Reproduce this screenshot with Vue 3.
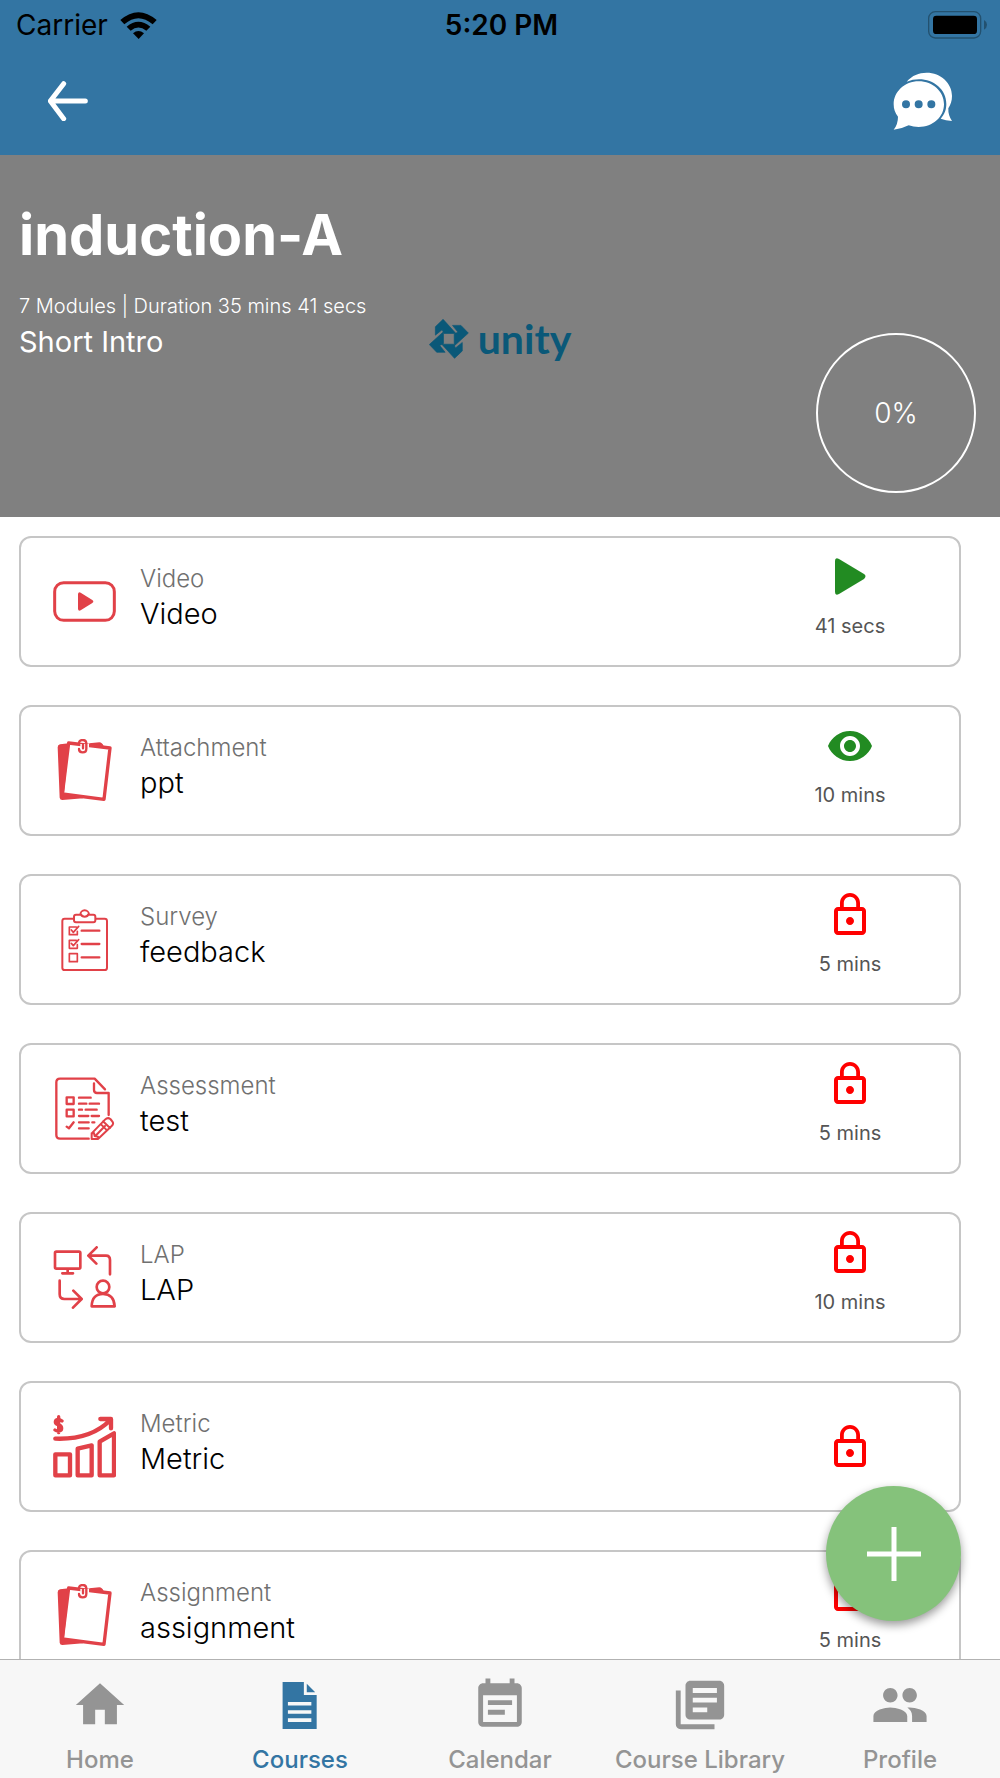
<script setup>
import { ref } from 'vue'

// Course modules
const modules = [
  { id: 1, type: 'Video', title: 'Video', icon: 'video', status: 'play', time: '41 secs' },
  { id: 2, type: 'Attachment', title: 'ppt', icon: 'paper', status: 'view', time: '10 mins' },
  { id: 3, type: 'Survey', title: 'feedback', icon: 'survey', status: 'lock', time: '5 mins' },
  { id: 4, type: 'Assessment', title: 'test', icon: 'assessment', status: 'lock', time: '5 mins' },
  { id: 5, type: 'LAP', title: 'LAP', icon: 'lap', status: 'lock', time: '10 mins' },
  { id: 6, type: 'Metric', title: 'Metric', icon: 'metric', status: 'lock', time: '' },
  { id: 7, type: 'Assignment', title: 'assignment', icon: 'paper', status: 'lock', time: '5 mins' }
]

// Bottom tabs
const tabs = [
  { name: 'Home', path: 'M10 20v-6h4v6h5v-8h3L12 3 2 12h3v8z' },
  { name: 'Courses', path: 'M4.8 2.5h8.8v5.4h5.3v14H4.800zM14.800 3.200v3.500h3.500zM7 10.800v1.400h9.700v-1.400zM7 14.200v1.400h9.700v-1.400zM7 17.500v1.500h9.700v-1.500z' },
  { name: 'Calendar', path: 'M17 10H7v2h10v-2zm2-7h-1V1h-2v2H8V1H6v2H5c-1.110 0-2 .9-2 2v14c0 1.100.890 2 2 2h14c1.100 0 2-.9 2-2V5c0-1.100-.9-2-2-2zm0 16H5V8h14v11zm-5-5H7v2h7v-2z' },
  { name: 'Course Library', path: 'M4 6H2v14c0 1.100.9 2 2 2h14v-2H4V6zm16-4H8c-1.100 0-2 .9-2 2v12c0 1.100.9 2 2 2h12c1.100 0 2-.9 2-2V4c0-1.100-.9-2-2-2zm-1 5H9V5h10v2zm0 4H9V9h10v2zm-4 4H9v-2h6v2z' },
  { name: 'Profile', path: 'M16 11c1.660 0 2.990-1.340 2.990-3S17.660 5 16 5s-3 1.340-3 3 1.340 3 3 3zm-8 0c1.660 0 2.990-1.340 2.990-3S9.660 5 8 5 5 6.340 5 8s1.340 3 3 3zm0 2c-2.330 0-7 1.170-7 3.500V19h14v-2.500c0-2.330-4.670-3.500-7-3.500zm8 0c-.290 0-.620.020-.970.050 1.160.840 1.970 1.970 1.970 3.450V19h6v-2.500c0-2.330-4.670-3.500-7-3.500z' }
]

const activeTab = ref('Courses')
</script>

<template>
  <div class="screen">
    <header class="header">
      <div class="status-bar">
        <div class="carrier">
          <span>Carrier</span>
          <svg class="wifi" viewBox="360 30 111 81" aria-hidden="true">
            <path d="M361 54Q415 7 470 54L458 67Q415 30 373 67Z" />
            <path d="M380 74Q415 44 451 74L439 86Q415 67 392 86Z" />
            <path d="M399 94Q415 80 432 94L416 111Z" />
          </svg>
        </div>
        <span class="clock">5:20 PM</span>
        <svg class="battery" viewBox="1284 31 177 84" aria-hidden="true">
          <rect x="1286" y="33" width="156" height="79" rx="20" fill="none" stroke="#23516f" stroke-width="4" />
          <rect x="1299" y="45" width="132" height="55" rx="10" />
          <path d="M1452 58Q1461 63 1461 72T1452 87Z" fill="#23516f" />
        </svg>
      </div>
      <div class="nav">
        <button type="button" aria-label="Back">
          <svg class="back-icon" viewBox="144 242 120 120" aria-hidden="true">
            <path d="M191 250L151 302L191 355M152 302H256" />
          </svg>
        </button>
        <button type="button" aria-label="Messages">
          <svg class="chat-icon" viewBox="1176 211 180 180" aria-hidden="true">
            <path d="M1220 243C1237 224 1256 216 1280 216C1322 216 1356 247 1356 286C1356 300 1352 312 1345 323Q1344 344 1356 361Q1337 359 1322 354C1334 340 1339 327 1339 310C1339 267 1302 236 1257 236Q1238 236 1220 243Z" />
            <path fill-rule="evenodd" d="M1256 242C1214 242 1181 273 1181 311C1181 325 1185 337 1194 348Q1194 371 1181 387Q1205 385 1226 374Q1240 379 1256 379C1299 379 1332 349 1332 311S1299 242 1256 242ZM1218 299a12 12 0 1 1 0 24a12 12 0 0 1 0-24ZM1256 299a12 12 0 1 1 0 24a12 12 0 0 1 0-24ZM1294 299a12 12 0 1 1 0 24a12 12 0 0 1 0-24Z" />
          </svg>
        </button>
      </div>
    </header>

    <section class="hero">
      <div class="brand">
        <svg viewBox="1284 959 119 119" aria-hidden="true">
          <path
            v-for="n in 4"
            :key="n"
            :transform="`rotate(${n * 90} 1343 1018)`"
            d="M1326 960L1303 982V1007L1323 991L1329 1002H1364Z"
          />
        </svg>
        <span>unity</span>
      </div>
      <div class="summary">
        <h1>induction-A</h1>
        <p class="meta">7 Modules | Duration 35 mins 41 secs</p>
        <p class="intro">Short Intro</p>
      </div>
      <div class="progress">0%</div>
    </section>

    <main class="content">
      <ul class="modules">
        <li v-for="item in modules" :key="item.id" class="card">
          <svg v-if="item.icon === 'video'" class="type-icon" viewBox="159 150 189 189" aria-hidden="true">
            <rect class="line" x="164" y="188" width="179" height="113" rx="27" stroke-width="9" />
            <path class="solid" d="M234 222Q235 215 242 218L277 240Q283 245 277 249L242 271Q235 274 234 267Z" />
          </svg>
          <svg v-else-if="item.icon === 'paper'" class="type-icon" viewBox="159 657 189 189" aria-hidden="true">
            <path class="solid" d="M180 673L207 670L192 820L250 835L187 840Q180 840 179 833L173 682Q173 674 180 673ZM268 670L298 667Q306 667 311 678L268 675Z" />
            <path class="line" stroke-width="10" d="M206 669L330 684L312 838L187 822Z" />
            <path d="M241 672H267V690H241Z" fill="#fff" />
            <path class="line" stroke-width="7" d="M237 667Q239 660 248 660Q259 660 259 671V686Q259 697 248 697T237 687M249 673V685" />
          </svg>
          <svg v-else-if="item.icon === 'survey'" class="type-icon" viewBox="159 144 189 189" aria-hidden="true">
            <path class="line" stroke-width="6" d="M221 176H194Q187 176 187 183V323Q187 330 194 330H314Q321 330 321 323V183Q321 176 314 176H287M228 164H241A13 13 0 1 1 267 164H280Q286 164 286 170V181Q286 187 280 187H228Q222 187 222 181V170Q222 164 228 164ZM242 162A13 13 0 0 0 266 162" />
            <path class="line" stroke-width="5" d="M229 201H208V224H232V214M214 210L220 217L236 199M229 241H208V265H232V254M214 250L220 257L236 239M208 281H232V305H208Z" />
            <path class="line" stroke-width="7" d="M245 212H298M245 252H298M245 292H298" />
          </svg>
          <svg v-else-if="item.icon === 'assessment'" class="type-icon" viewBox="159 651 189 189" aria-hidden="true">
            <path class="line" stroke-width="7" d="M266 836H180Q169 836 169 825V667Q169 656 180 656H284L315 688M282 670V690Q282 699 291 699H326V765M237 713H272M237 731H259M269 731H297M237 749H246M257 749H290M237 768H265M275 768H297M237 787H266M277 787H283M237 805H266M200 800L207 805L221 787" />
            <path class="line" stroke-width="7" d="M200 712H221V732H200ZM200 749H221V769H200Z" />
            <path class="line" stroke-width="6" d="M275 820L315 779Q323 771 331 777L336 783Q343 791 335 798L294 837H275ZM309 784L330 804M303 793L321 811M286 828L315 798M275 820L282 819L284 828L294 830V837" />
          </svg>
          <svg v-else-if="item.icon === 'lap'" class="type-icon" viewBox="159 139 189 189" aria-hidden="true">
            <path class="line" stroke-width="8" d="M169 156H237Q241 156 241 160V203Q241 207 237 207H169Q165 207 165 203V160Q165 156 169 156ZM203 208V220M187 221H219M290 143L265 168L289 192M266 168H318Q330 168 330 181V224M179 243V284Q179 298 193 298H243M220 273L245 298L219 324" />
            <circle class="line" cx="309" cy="262" r="19" stroke-width="8" />
            <path class="line" stroke-width="8" d="M275 320Q276 283 309 283T344 320Z" />
          </svg>
          <svg v-else class="type-icon" viewBox="159 647 189 189" aria-hidden="true">
            <path class="line" stroke-width="10" d="M186 665Q180 660 174 660Q166 661 166 668Q166 674 175 676Q185 679 185 687Q185 695 175 695Q169 695 165 692M176 652V700" />
            <path class="line" stroke-width="13" d="M166 718Q272 722 331 662M301 659H333V687M166 765H210V828H166ZM233 748L275 738V828H233ZM299 727L342 702V828H299Z" />
          </svg>

          <div class="info">
            <span class="type">{{ item.type }}</span>
            <h2>{{ item.title }}</h2>
          </div>

          <div class="status">
            <svg v-if="item.status === 'play'" viewBox="0 0 48 48" fill="#228b22" aria-hidden="true">
              <path d="M9 8Q9 4 13 6L38 21Q41 23 38 26L13 41Q9 43 9 39Z" />
            </svg>
            <svg v-else-if="item.status === 'view'" viewBox="0 0 24 24" fill="#228b22" aria-hidden="true">
              <path d="M12 4.500C7 4.500 2.730 7.610 1 12c1.730 4.390 6 7.500 11 7.500s9.270-3.110 11-7.500c-1.730-4.390-6-7.500-11-7.500zM12 17c-2.760 0-5-2.240-5-5s2.240-5 5-5 5 2.240 5 5-2.240 5-5 5zm0-8c-1.660 0-3 1.340-3 3s1.340 3 3 3 3-1.340 3-3-1.340-3-3-3z" />
            </svg>
            <svg v-else viewBox="0 0 24 24" fill="#f00" aria-hidden="true">
              <path d="M12 17c1.100 0 2-.9 2-2s-.9-2-2-2-2 .9-2 2 .9 2 2 2zm6-9h-1V6c0-2.760-2.240-5-5-5S7 3.240 7 6v2H6c-1.100 0-2 .9-2 2v10c0 1.100.9 2 2 2h12c1.100 0 2-.9 2-2V10c0-1.100-.9-2-2-2zM8.900 6c0-1.710 1.390-3.100 3.100-3.100s3.100 1.390 3.100 3.100v2H8.900V6zM18 20H6V10h12v10z" />
            </svg>
            <span v-if="item.time" class="time">{{ item.time }}</span>
          </div>
        </li>
      </ul>
    </main>

    <button class="fab" type="button" aria-label="Add">
      <svg viewBox="0 0 54 54" aria-hidden="true">
        <path d="M27 0V54M0 27H54" stroke="#fff" stroke-width="5" />
      </svg>
    </button>

    <nav class="tab-bar">
      <a
        v-for="tab in tabs"
        :key="tab.name"
        href="#"
        :class="{ active: activeTab === tab.name }"
        @click.prevent="activeTab = tab.name"
      >
        <svg viewBox="0 0 24 24" aria-hidden="true">
          <path fill-rule="evenodd" :d="tab.path" />
        </svg>
        <span>{{ tab.name }}</span>
      </a>
    </nav>
  </div>
</template>

<style>
body {
  margin: 0;
  background-color: #fff;
}
</style>

<style scoped>
.screen {
  position: relative;
  display: flex;
  flex-direction: column;
  height: 100vh;
  overflow: hidden;
  font-family: Inter, 'Liberation Sans', sans-serif;
  color: #000;
}

svg {
  display: block;
}

h1,
h2,
p,
ul {
  margin: 0;
  padding: 0;
}

button {
  padding: 0;
  border: none;
  background: none;
  cursor: pointer;
}

/* ==================== Header ==================== */
.header {
  flex: none;
  background-color: #3375a3;
}

.status-bar {
  display: grid;
  grid-template-columns: 1fr auto 1fr;
  align-items: center;
  padding: 0 13px 0 16px;
  font-size: 28px;
  line-height: 50px;
}

.carrier {
  display: flex;
  align-items: center;
  gap: 12px;
}

.wifi {
  width: 37px;
  height: 27px;
}

.clock {
  font-weight: 600;
}

.battery {
  justify-self: end;
  width: 59px;
  height: 28px;
}

.nav {
  display: flex;
  align-items: center;
  justify-content: space-between;
  padding: 21px 48px 24px;
}

.back-icon {
  width: 40px;
  height: 40px;
  fill: none;
  stroke: #fff;
  stroke-width: 15;
  stroke-linecap: round;
  stroke-linejoin: round;
}

.chat-icon {
  width: 60px;
  height: 60px;
  fill: #fff;
}

/* ==================== Hero ==================== */
.hero {
  position: relative;
  flex: none;
  display: flex;
  justify-content: space-between;
  box-sizing: border-box;
  min-height: 362px;
  padding: 44px 24px 24px 19px;
  background-color: #808080;
  color: #fff;
}

.hero h1 {
  font-size: 56px;
  font-weight: 700;
  line-height: 72px;
}

.meta {
  margin-top: 20px;
  font-size: 20px;
  font-weight: 300;
  line-height: 30px;
}

.intro {
  margin-top: 3px;
  font-size: 29px;
  line-height: 36px;
}

/* logo sits behind the course text */
.brand {
  position: absolute;
  inset: 6px 0 0;
  display: flex;
  align-items: center;
  justify-content: center;
  gap: 9px;
  color: #0a5878;
  font-family: Lato, sans-serif;
  font-size: 41px;
  font-weight: 700;
  line-height: 40px;
}

.brand svg {
  width: 40px;
  height: 40px;
  fill: currentColor;
  stroke: currentColor;
  stroke-width: 2;
}

.summary {
  position: relative;
}

.progress {
  position: relative;
  align-self: flex-end;
  box-sizing: border-box;
  width: 160px;
  border: 2px solid #fff;
  border-radius: 50%;
  font-size: 28px;
  font-weight: 300;
  line-height: 156px;
  text-align: center;
}

/* ==================== Modules ==================== */
.content {
  flex: 1;
  min-height: 0;
  overflow: auto;
  scrollbar-width: none;
}

.modules {
  display: flex;
  flex-direction: column;
  gap: 38px;
  padding: 19px 39px 38px 19px;
  list-style: none;
}

.card {
  display: flex;
  align-items: center;
  box-sizing: border-box;
  height: 131px;
  padding-left: 32px;
  border: 2px solid #c6c6c6;
  border-radius: 12px;
}

.type-icon {
  flex: none;
  width: 63px;
  height: 63px;
}

.line {
  fill: none;
  stroke: #e14148;
  stroke-linecap: round;
  stroke-linejoin: round;
}

.solid {
  fill: #e14148;
}

.info {
  flex: 1;
  padding: 0 24px 10px;
}

.type {
  display: block;
  color: #707070;
  font-size: 24px;
  font-weight: 300;
  line-height: 34px;
}

.info h2 {
  font-size: 29px;
  font-weight: 300;
  line-height: 36px;
}

.status {
  display: flex;
  flex-direction: column;
  align-items: center;
  width: 218px;
}

.status svg {
  width: 48px;
  height: 48px;
}

.time {
  color: #555;
  font-size: 20px;
  line-height: 50px;
}

/* ==================== Add button ==================== */
.fab {
  position: absolute;
  right: 39px;
  bottom: 157px;
  display: grid;
  place-items: center;
  width: 135px;
  height: 135px;
  border-radius: 50%;
  background-color: #85c27b;
  box-shadow: 0 4px 10px rgba(0, 0, 0, 0.4);
}

.fab svg {
  width: 54px;
  height: 54px;
}

/* ==================== Tab bar ==================== */
.tab-bar {
  flex: none;
  display: grid;
  grid-template-columns: repeat(5, 1fr);
  padding: 16px 0 3px;
  border-top: 1px solid #b2b2b2;
  background-color: #f7f7f7;
}

.tab-bar a {
  display: flex;
  flex-direction: column;
  align-items: center;
  gap: 11px;
  color: #949494;
  font-size: 24px;
  font-weight: 500;
  line-height: 30px;
  text-decoration: none;
  white-space: nowrap;
}

.tab-bar svg {
  width: 58px;
  height: 58px;
  fill: currentColor;
}

.tab-bar a.active {
  color: #3375a3;
}
</style>
